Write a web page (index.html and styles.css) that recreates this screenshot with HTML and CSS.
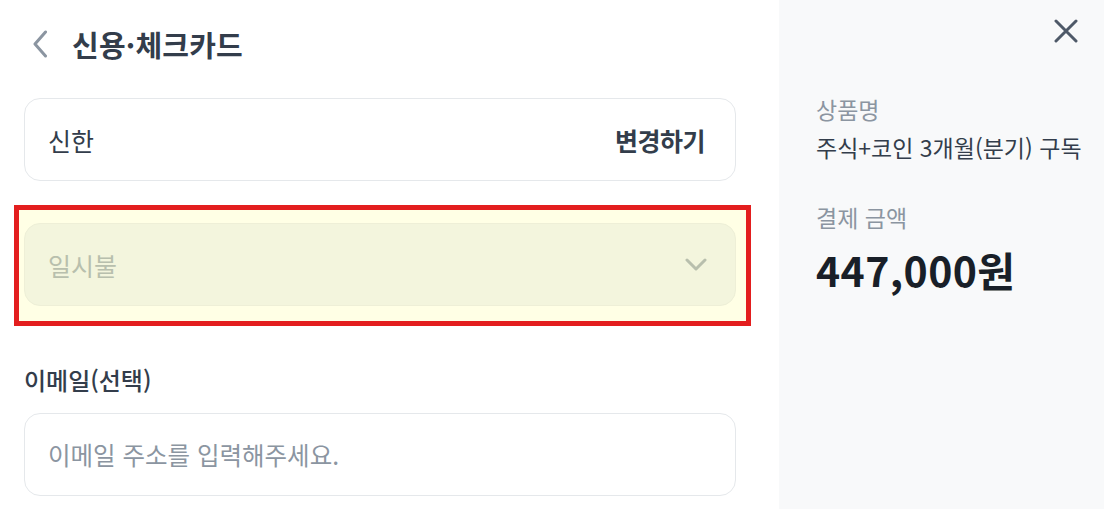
FILE: index.html
```html
<!DOCTYPE html>
<html lang="ko">
<head>
<meta charset="utf-8">
<link rel="stylesheet" href="styles.css">
</head>
<body>
<div class="page">
  <main class="main">
    <header class="header">
      <button class="back" aria-label="뒤로">
        <svg width="16" height="28" viewBox="0 0 16 28"><path d="M13.5 2 L3 14 L13.5 26" fill="none" stroke="#8b95a1" stroke-width="3" stroke-linecap="round" stroke-linejoin="round"/></svg>
      </button>
      <h1 class="title">신용·체크카드</h1>
    </header>

    <div class="field card-row">
      <span class="value">신한</span>
      <span class="action">변경하기</span>
    </div>

    <div class="select-wrap">
      <div class="field select">
        <span class="placeholder">일시불</span>
        <svg class="caret" width="22" height="14" viewBox="0 0 22 14"><path d="M2 2 L11 11 L20 2" fill="none" stroke="#b0b8c1" stroke-width="3" stroke-linecap="round" stroke-linejoin="round"/></svg>
      </div>
      <div class="highlight"></div>
    </div>

    <label class="label">이메일(선택)</label>
    <div class="field input">
      <span class="placeholder">이메일 주소를 입력해주세요.</span>
    </div>
  </main>

  <aside class="side">
    <div class="side-top">
      <button class="close" aria-label="닫기">
        <svg width="24" height="24" viewBox="0 0 24 24"><path d="M2 2 L22 22 M22 2 L2 22" fill="none" stroke="#4e5968" stroke-width="3" stroke-linecap="round"/></svg>
      </button>
    </div>
    <div class="info">
      <div class="info-label">상품명</div>
      <div class="info-value">주식+코인 3개월(분기) 구독</div>
    </div>
    <div class="info info-price">
      <div class="info-label">결제 금액</div>
      <div class="price">447,000원</div>
    </div>
  </aside>
</div>
</body>
</html>
```

FILE: styles.css
```css
* { box-sizing: border-box; }
html, body {
  margin: 0;
  padding: 0;
  background: #ffffff;
}
body {
  font-family: "Noto Sans CJK KR", "Noto Sans", sans-serif;
  color: #191f28;
}
.page {
  display: flex;
  width: 1104px;
  height: 509px;
  overflow: hidden;
}
.main {
  width: 779px;
  flex: none;
  padding: 0 43px 0 24px;
}
.header {
  display: flex;
  align-items: center;
  height: 90px;
  padding-bottom: 2px;
}
.back {
  border: 0;
  background: none;
  padding: 0;
  margin-left: 8px;
  width: 40px;
  height: 30px;
  display: flex;
  align-items: center;
}
.title {
  margin: 0;
  font-size: 29px;
  font-weight: 700;
  color: #333d4b;
  letter-spacing: 0.2px;
}
.field {
  height: 83px;
  border: 1.5px solid #e5e8eb;
  border-radius: 16px;
  display: flex;
  align-items: center;
  justify-content: space-between;
  padding: 0 30px 0 23px;
  font-size: 25px;
}
.card-row { margin-top: 8px; }
.value { color: #333d4b; }
.action { color: #333d4b; font-weight: 700; letter-spacing: -0.5px; }
.select-wrap {
  position: relative;
  margin-top: 42px;
}
.select {
  background: #f2f4f6;
  border-color: #eceef0;
  padding-right: 28px;
}
.placeholder { color: #8b95a1; }
.select .placeholder { color: #b0b8c1; }
.highlight {
  position: absolute;
  top: -18px;
  left: -10px;
  right: -15px;
  bottom: -20px;
  border: 5px solid #e31e1e;
  background: rgba(255, 255, 0, 0.1);
}
.label {
  display: block;
  margin-top: 59px;
  font-size: 24px;
  font-weight: 500;
  color: #333d4b;
  line-height: 30px;
}
.input {
  margin-top: 18px;
  background: #fff;
  font-size: 24.5px;
}
.side {
  flex: 1;
  min-width: 0;
  background: #f8f9fa;
  padding: 0 24px 0 37px;
}
.side-top {
  display: flex;
  justify-content: flex-end;
  height: 94px;
  padding-top: 19px;
}
.close {
  border: 0;
  background: none;
  padding: 0;
  width: 24px;
  height: 24px;
  margin-right: 2px;
}
.info-label {
  font-size: 23px;
  color: #8b95a1;
  line-height: 30px;
}
.info-value {
  font-size: 23px;
  color: #333d4b;
  line-height: 30px;
  margin-top: 8px;
  white-space: nowrap;
}
.info-price { margin-top: 40px; }
.price {
  font-size: 41px;
  font-weight: 700;
  color: #191f28;
  line-height: 50px;
  margin-top: 12px;
  letter-spacing: 0.4px;
}
```
